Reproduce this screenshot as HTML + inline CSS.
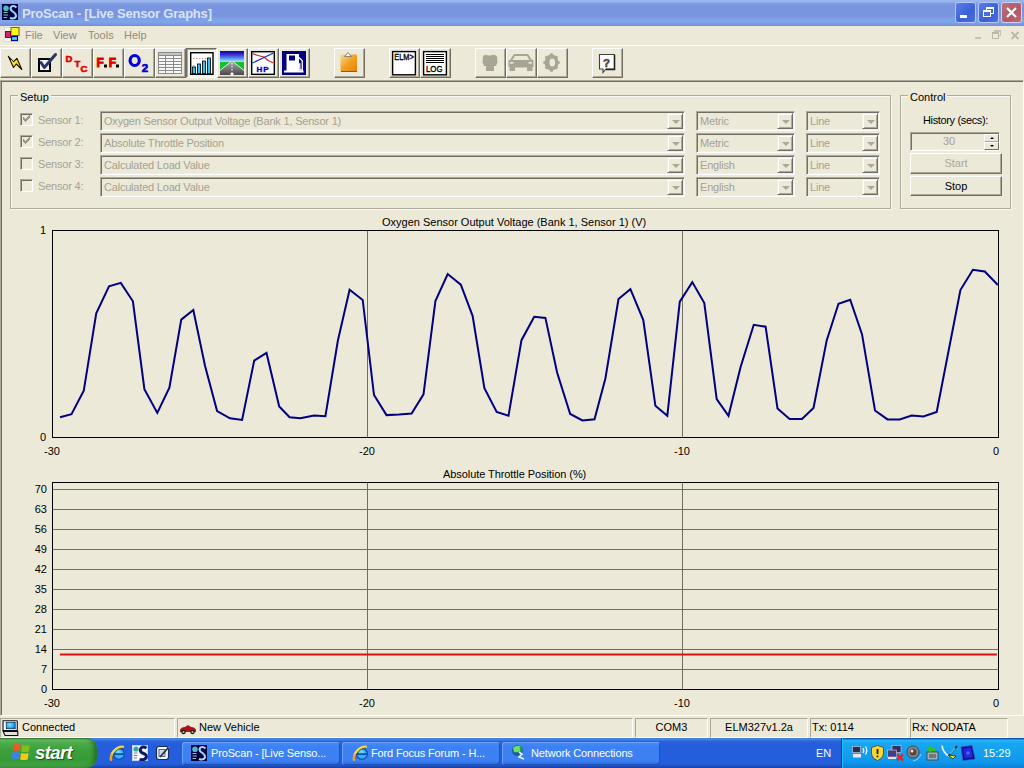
<!DOCTYPE html>
<html><head><meta charset="utf-8">
<style>
*{margin:0;padding:0;box-sizing:border-box}
html,body{width:1024px;height:768px;overflow:hidden;background:#ECE9D8;font-family:"Liberation Sans",sans-serif;font-size:11px;color:#000}
.a{position:absolute}
#title{left:0;top:0;width:1024px;height:26px;background:linear-gradient(#9AB6EE 0,#98B4EE 2px,#7F9CE0 3.5px,#7A95E0 6px,#7A95E0 16px,#7FA0E5 19px,#7AA8E8 22px,#7C98E2 24px,#7A88D8 26px)}
#ttext{left:22px;top:6px;font-weight:bold;font-size:13px;color:#D8E4F8;letter-spacing:-0.2px;white-space:nowrap}
.tb{top:2px;width:21px;height:21px;border:1px solid #B8C8F4;border-radius:3px;background:linear-gradient(135deg,#5A7EE8,#3A60D8 60%,#4A70E0)}
#menubar{left:0;top:26px;width:1024px;height:19px;background:#ECE9D8}
.mi{top:29px;color:#8F8C80;font-size:11px}
#toolbar{left:0;top:45px;width:1024px;height:36px}
.pressed{border-left:1px solid #716F64!important;border-top:1px solid #716F64!important;border-right:1px solid #fff!important;border-bottom:1px solid #fff!important;box-shadow:inset 1px 1px 0 #ACA899!important;background:#F4F3EE}
.btn{top:48px;width:31px;height:30px;border-left:1px solid #fff;border-top:1px solid #fff;border-right:1px solid #716F64;border-bottom:1px solid #716F64;box-shadow:inset -1px -1px 0 #ACA899}
.sunk{border-top:1px solid #716F64;border-left:1px solid #716F64;border-bottom:1px solid #fff;border-right:1px solid #fff}
.grp{border:1px solid #AEAB9C;box-shadow:inset 1px 1px 0 #F8F7F0,1px 1px 0 #F8F7F0}
.gl{background:#ECE9D8;padding:0 2px;white-space:nowrap}
.combo{height:20px;border-top:1px solid #ACA899;border-left:1px solid #ACA899;border-bottom:1px solid #fff;border-right:1px solid #fff;box-shadow:inset 1px 1px 0 #716F64,inset -1px -1px 0 #F1EFE2;background:#ECE9D8;color:#A4A194;white-space:nowrap;overflow:hidden}
.combo span{position:absolute;left:3px;top:3px;letter-spacing:-0.2px}
.dd{position:absolute;right:1px;top:1px;width:16px;height:16px;border-top:1px solid #F1EFE2;border-left:1px solid #F1EFE2;border-right:1px solid #716F64;border-bottom:1px solid #716F64;box-shadow:inset 1px 1px 0 #fff,inset -1px -1px 0 #ACA899;background:#ECE9D8}
.dd:after{content:"";position:absolute;left:4px;top:6px;border-left:4px solid transparent;border-right:4px solid transparent;border-top:4px solid #ACA899}
.chk{width:13px;height:13px;border-top:1px solid #ACA899;border-left:1px solid #ACA899;border-bottom:1px solid #fff;border-right:1px solid #fff;box-shadow:inset 1px 1px 0 #716F64,inset -1px -1px 0 #F1EFE2;background:#ECE9D8}
.slab{color:#A4A194;white-space:nowrap;letter-spacing:-0.2px}
.pb{border-top:1px solid #fff;border-left:1px solid #fff;border-right:1px solid #716F64;border-bottom:1px solid #716F64;box-shadow:inset -1px -1px 0 #ACA899;text-align:center;background:#ECE9D8}
.ylab{text-align:right;width:30px;white-space:nowrap}
.xlab{width:40px;text-align:center;white-space:nowrap}
#status{left:0;top:718px;width:1024px;height:20px;background:#ECE9D8}
.sp{top:718px;height:20px;border-top:1px solid #ACA899;border-left:1px solid #ACA899;border-right:1px solid #fff;border-bottom:1px solid #fff;white-space:nowrap}
#taskbar{left:0;top:738px;width:1024px;height:30px;background:linear-gradient(#3168D5 0,#4993E6 1px,#2D63DE 3px,#245EDC 6px,#245EDC 26px,#1941A5 30px)}
.tt{top:747px;color:#fff;white-space:nowrap;letter-spacing:-0.15px}
.task{top:742px;height:23px;border-radius:3px;background:linear-gradient(#4A8CF7,#3C81F3 20%,#3C81F3 80%,#2E6AE0);color:#fff;font-size:11px;white-space:nowrap;box-shadow:inset 1px 1px 0 #6AA0F8,inset -1px -1px 0 #1E52B7}
</style></head><body>

<!-- TITLE BAR -->
<div id="title" class="a"></div>
<svg class="a" style="left:2px;top:4px" width="16" height="16" viewBox="0 0 16 16"><rect width="16" height="16" fill="#000040"/><path d="M14.5 3.5 Q12 1 9.5 2.5 Q7.5 4.5 10 7 Q14.5 9.5 14 12.5 Q12.5 15.5 8 14" stroke="#A8D8F0" stroke-width="2" fill="none"/><circle cx="4" cy="4.2" r="2.8" fill="#48B8D0"/><path d="M1.5 8.5 H5.5M1.5 11 H6M1.5 13.5 H5" stroke="#90C8A0" stroke-width="1.2"/></svg>
<div id="ttext" class="a">ProScan - [Live Sensor Graphs]</div>
<div class="a tb" style="left:955px"><div class="a" style="left:4px;top:12px;width:7px;height:3px;background:#fff"></div></div>
<div class="a tb" style="left:978px"><div class="a" style="left:7px;top:4px;width:8px;height:7px;border:1px solid #fff;border-top-width:2px"></div><div class="a" style="left:4px;top:7px;width:8px;height:7px;border:1px solid #fff;border-top-width:2px;background:#4A6EDC"></div></div>
<div class="a tb" style="left:1001px;border-color:#D0D0F4;background:linear-gradient(135deg,#B87080,#B05A68 60%,#C06870)"><svg class="a" style="left:3px;top:3px" width="13" height="13" viewBox="0 0 13 13"><path d="M2 2 L11 11M11 2 L2 11" stroke="#fff" stroke-width="2.2"/></svg></div>
<!-- MENU BAR -->
<div id="menubar" class="a"></div>
<svg class="a" style="left:4px;top:27px" width="16" height="16" viewBox="0 0 16 16"><rect x="0.5" y="0.5" width="15" height="14" fill="#F8F8F0" stroke="#D8D8D0" stroke-width="0.8"/><rect x="7" y="0.5" width="8" height="8" fill="#F8F820" stroke="#707000" stroke-width="1"/><rect x="1.5" y="4.5" width="5" height="6" fill="#D02070" stroke="#800030" stroke-width="1"/><rect x="7.5" y="9.5" width="6" height="4" fill="#40D8F8" stroke="#000080" stroke-width="1.2"/></svg>
<div class="a mi" style="left:25px">File</div>
<div class="a mi" style="left:53px">View</div>
<div class="a mi" style="left:88px">Tools</div>
<div class="a mi" style="left:124px">Help</div>
<!-- mdi controls -->
<div class="a" style="left:975px;top:37px;width:6px;height:2px;background:#C4C1B4"></div>
<div class="a" style="left:994px;top:30px;width:7px;height:6px;border:1px solid #C4C1B4;border-top-width:2px"></div>
<div class="a" style="left:992px;top:32px;width:7px;height:7px;border:1px solid #BAB7AA;border-top-width:2px;background:#ECE9D8"></div>
<svg class="a" style="left:1010px;top:31px" width="10" height="9" viewBox="0 0 10 9"><path d="M1.5 1 L8.5 8M8.5 1 L1.5 8" stroke="#BAB7AA" stroke-width="1.8"/></svg>
<!-- TOOLBAR -->
<div id="toolbar" class="a"></div>
<div class="a" style="left:0;top:45px;width:1024px;height:1px;background:#fff"></div>


<!-- toolbar buttons -->
<div class="a btn" style="left:0px"></div>
<div class="a btn" style="left:31px"></div>
<div class="a btn" style="left:62px"></div>
<div class="a btn" style="left:93px"></div>
<div class="a btn" style="left:124px"></div>
<div class="a btn" style="left:155px"></div>
<div class="a btn pressed" style="left:186px"></div>
<div class="a btn" style="left:217px"></div>
<div class="a btn" style="left:248px"></div>
<div class="a btn" style="left:279px"></div>
<div class="a btn" style="left:334px"></div>
<div class="a btn" style="left:389px"></div>
<div class="a btn" style="left:420px"></div>
<div class="a btn" style="left:475px"></div>
<div class="a btn" style="left:506px"></div>
<div class="a btn" style="left:537px"></div>
<div class="a btn" style="left:592px"></div>
<!-- icons -->
<svg class="a" style="left:6px;top:54px" width="18" height="18" viewBox="0 0 18 18"><path d="M2.3 2.3 L7.5 7.8 L10.9 4.3 L15.8 15.5 L10.3 10 L7.5 13.5 Z" fill="#F8D820" stroke="#181000" stroke-width="1.1" stroke-linejoin="round"/><path d="M5 6 L7.8 9.5 L10.5 6.8" stroke="#FFF070" stroke-width="1" fill="none"/></svg>
<svg class="a" style="left:36px;top:52px" width="22" height="21" viewBox="0 0 22 21"><rect x="3" y="7" width="11" height="12" fill="#F4F4FC" stroke="#000" stroke-width="2"/><path d="M5 10.5 L8.3 15.5 L19.5 2.5" stroke="#2C3468" stroke-width="3" fill="none" stroke-linejoin="round" stroke-linecap="round"/></svg>
<svg class="a" style="left:64px;top:53px" width="26" height="21" viewBox="0 0 26 21" font-family="Liberation Sans" font-weight="bold" fill="#E00000" stroke="#E00000" stroke-width="0.6"><text x="1.5" y="8.5" font-size="9.5">D</text><text x="10.5" y="14" font-size="9.5">T</text><text x="16.5" y="19" font-size="9.5">C</text></svg>
<svg class="a" style="left:94px;top:53px" width="29" height="18" viewBox="0 0 29 18" font-family="Liberation Sans" font-weight="bold"><text x="2.5" y="14" font-size="12" fill="#E00000" stroke="#E00000" stroke-width="0.9">F</text><rect x="10" y="11.5" width="3" height="3" fill="#000"/><text x="14.8" y="14" font-size="12" fill="#E00000" stroke="#E00000" stroke-width="0.9">F</text><rect x="22" y="11.5" width="3" height="3" fill="#000"/></svg>
<svg class="a" style="left:126px;top:52px" width="26" height="22" viewBox="0 0 26 22"><ellipse cx="8.7" cy="8.5" rx="4.6" ry="5" fill="none" stroke="#0000E0" stroke-width="3.2"/><text x="15.8" y="19.8" font-family="Liberation Sans" font-weight="bold" font-size="11.5" fill="#0000D8" stroke="#0000D8" stroke-width="0.7">2</text></svg>
<svg class="a" style="left:158px;top:52px" width="25" height="23" viewBox="0 0 25 23"><rect x="0" y="0" width="24" height="22" fill="#8A8A8A"/><g fill="#F8F8F8"><rect x="1" y="4" width="6" height="2"/><rect x="8" y="4" width="7" height="2"/><rect x="16" y="4" width="7" height="2"/><rect x="1" y="7" width="6" height="2"/><rect x="8" y="7" width="7" height="2"/><rect x="16" y="7" width="7" height="2"/><rect x="1" y="10" width="6" height="2"/><rect x="8" y="10" width="7" height="2"/><rect x="16" y="10" width="7" height="2"/><rect x="1" y="13" width="6" height="2"/><rect x="8" y="13" width="7" height="2"/><rect x="16" y="13" width="7" height="2"/><rect x="1" y="16" width="6" height="2"/><rect x="8" y="16" width="7" height="2"/><rect x="16" y="16" width="7" height="2"/><rect x="1" y="19" width="6" height="2"/><rect x="8" y="19" width="7" height="2"/><rect x="16" y="19" width="7" height="2"/></g><rect x="1" y="1" width="22" height="2" fill="#C4C4C4"/></svg>
<svg class="a" style="left:190px;top:52px" width="24" height="23" viewBox="0 0 24 23"><rect x="0.7" y="0.7" width="22.3" height="21.6" fill="#fff" stroke="#000" stroke-width="1.4"/><path d="M3 6.5H21M3 13.5H5" stroke="#A08080" stroke-width="0.8" stroke-dasharray="1.5 1.5"/><g fill="#38C0F0" stroke="#101010" stroke-width="0.9"><rect x="2.5" y="15" width="3" height="6.5"/><rect x="7.5" y="12" width="3" height="9.5"/><rect x="12.5" y="9" width="3" height="12.5"/><rect x="17.5" y="6" width="3" height="15.5"/></g></svg>
<svg class="a" style="left:220px;top:51px" width="24" height="24" viewBox="0 0 24 24"><defs><linearGradient id="sky" x1="0" y1="0" x2="0" y2="1"><stop offset="0" stop-color="#100090"/><stop offset="0.3" stop-color="#3828D8"/><stop offset="0.65" stop-color="#5090E8"/><stop offset="1" stop-color="#B8E0F8"/></linearGradient><linearGradient id="rd" x1="0" y1="0" x2="0" y2="1"><stop offset="0" stop-color="#A8A8A8"/><stop offset="1" stop-color="#484848"/></linearGradient></defs><rect width="24" height="11" fill="url(#sky)"/><rect y="11" width="24" height="13" fill="#10C030"/><path d="M10.5 11 H13.5 L24 19.5 V24 H0 V19.5 Z" fill="url(#rd)"/><path d="M10.5 11 L0 19.5M13.5 11 L24 19.5" stroke="#F0F8F0" stroke-width="0.9"/><path d="M12 12 V22" stroke="#fff" stroke-width="1" stroke-dasharray="1.5 1.5"/><rect x="10.5" y="22" width="3" height="2" fill="#fff"/></svg>
<svg class="a" style="left:251px;top:51px" width="24" height="24" viewBox="0 0 24 24"><rect x="0.7" y="0.7" width="22.6" height="22.6" fill="#fff" stroke="#000" stroke-width="1.4"/><path d="M1.5 2.5 L7 4.5 L13 6 L17 9.5 L22.5 12" stroke="#D02020" stroke-width="1.2" fill="none"/><path d="M1.5 12 L12 7 L22.5 2" stroke="#1030C8" stroke-width="1.2" fill="none"/><text x="5.5" y="21.3" font-family="Liberation Sans" font-weight="bold" font-size="8" fill="#0000C0" stroke="#0000C0" stroke-width="0.35" letter-spacing="1">HP</text></svg>
<svg class="a" style="left:282px;top:51px" width="24" height="24" viewBox="0 0 24 24"><rect width="24" height="24" fill="#000080"/><rect x="4.5" y="3" width="12.5" height="17" fill="#fff"/><rect x="7" y="4.5" width="6" height="5" fill="#000080"/><path d="M17 6.5 L20.3 9.8 V19 H17.8 V13 H17" stroke="#fff" stroke-width="1.3" fill="none"/><rect x="2" y="19.5" width="19.5" height="2" fill="#fff"/></svg>
<svg class="a" style="left:339px;top:51px" width="20" height="22" viewBox="0 0 20 22"><defs><linearGradient id="clip" x1="0" y1="0" x2="1" y2="1"><stop offset="0" stop-color="#F8D898"/><stop offset="0.5" stop-color="#F0A020"/><stop offset="1" stop-color="#E88010"/></linearGradient></defs><rect x="1.5" y="3.5" width="16.5" height="17" rx="1" fill="url(#clip)"/><path d="M2 20.5 H18" stroke="#A05010" stroke-width="1"/><path d="M5.5 5.5 L9 1.5 L12.5 5.5 Z" fill="#F0F0F0" stroke="#707070" stroke-width="0.8"/></svg>
<svg class="a" style="left:391px;top:50px" width="26" height="26" viewBox="0 0 26 26"><rect x="1.6" y="1.6" width="22.8" height="23.2" fill="#fff" stroke="#000" stroke-width="1.4"/><text x="3.3" y="9.8" font-family="Liberation Sans" font-size="9" fill="#000" stroke="#000" stroke-width="0.35" textLength="19.5" lengthAdjust="spacingAndGlyphs">ELM&gt;</text></svg>
<svg class="a" style="left:422px;top:50px" width="26" height="26" viewBox="0 0 26 26"><rect x="1.6" y="1.6" width="22.8" height="23.2" fill="#fff" stroke="#000" stroke-width="1.4"/><path d="M4 4.5H22M4 6.5H22M4 8.5H22M4 10.5H22M4 12.5H22" stroke="#000" stroke-width="1"/><text x="4" y="22.3" font-family="Liberation Sans" font-size="9" fill="#000" stroke="#000" stroke-width="0.35" textLength="16.5" lengthAdjust="spacingAndGlyphs">LOG</text></svg>
<svg class="a" style="left:481px;top:53px" width="18" height="19" viewBox="0 0 18 19"><path d="M2 3.5 Q3.5 0.8 7 2.5 H10 Q13.5 0.8 16 3.5 L16.5 9 L15 13 H13 V18 H5 V13 H3 L1.5 9 Z" fill="#A8A594"/></svg>
<svg class="a" style="left:508px;top:53px" width="26" height="19" viewBox="0 0 26 19"><path d="M6 1 H20 L24 7 H25.5 V14 H24.5 V18 H19 V14.5 H7 V18 H1.5 V14 H0.5 V7 H2 Z" fill="#A8A594"/><path d="M7 3 H19 L21.5 7 H4.5 Z" fill="#ECE9D8"/><rect x="2" y="9" width="3.5" height="1.6" fill="#ECE9D8"/><rect x="20.5" y="9" width="3.5" height="1.6" fill="#ECE9D8"/></svg>
<svg class="a" style="left:543px;top:53px" width="17" height="19" viewBox="0 0 17 19"><g fill="#A8A594"><ellipse cx="8.5" cy="9.5" rx="7" ry="8"/><g stroke="#A8A594" stroke-width="2.6"><path d="M8.5 0.3V18.7M0.3 9.5H16.7M2.7 3.3L14.3 15.7M14.3 3.3L2.7 15.7"/></g></g><ellipse cx="9.3" cy="9.5" rx="2.8" ry="4" fill="#ECE9D8"/></svg>
<svg class="a" style="left:598px;top:53px" width="19" height="21" viewBox="0 0 19 21"><path d="M1.5 1.5 H16.5 V16 H8 L5 19.5 V16 H1.5 Z" fill="#FAFAFA" stroke="#404040" stroke-width="1.1"/><path d="M16.5 2 V16.5 H8" stroke="#202020" stroke-width="1.5" fill="none"/><text x="5" y="13.5" font-family="Liberation Sans" font-weight="bold" font-size="11.5" fill="#484848" stroke="#484848" stroke-width="0.5">?</text></svg>

<!-- CLIENT -->
<div class="a" style="left:0;top:80px;width:1024px;height:636px;border-top:1px solid #ACA899;border-left:1px solid #ACA899;border-right:1px solid #fff;border-bottom:1px solid #fff;box-shadow:inset 1px 1px 0 #716F64"></div>


<!-- SETUP GROUP -->
<div class="a grp" style="left:10px;top:95px;width:881px;height:114px"></div>
<div class="a gl" style="left:18px;top:91px">Setup</div>
<div class="a chk" style="left:20px;top:113px"></div>
<svg class="a" style="left:23px;top:115px" width="7" height="7" viewBox="0 0 7 7" shape-rendering="crispEdges"><path d="M6 0h1v1h-1zM5 1h1v1h-1zM6 1h1v1h-1zM0 2h1v1h-1zM4 2h1v1h-1zM5 2h1v1h-1zM6 2h1v1h-1zM0 3h1v1h-1zM1 3h1v1h-1zM3 3h1v1h-1zM4 3h1v1h-1zM5 3h1v1h-1zM0 4h1v1h-1zM1 4h1v1h-1zM2 4h1v1h-1zM3 4h1v1h-1zM4 4h1v1h-1zM1 5h1v1h-1zM2 5h1v1h-1zM3 5h1v1h-1zM2 6h1v1h-1z" fill="#9A978A"/></svg>
<div class="a slab" style="left:38px;top:114px">Sensor 1:</div>
<div class="a combo" style="left:100px;top:111px;width:585px"><span>Oxygen Sensor Output Voltage (Bank 1, Sensor 1)</span><div class="dd"></div></div>
<div class="a combo" style="left:696px;top:111px;width:99px"><span>Metric</span><div class="dd"></div></div>
<div class="a combo" style="left:806px;top:111px;width:74px"><span>Line</span><div class="dd"></div></div>
<div class="a chk" style="left:20px;top:135px"></div>
<svg class="a" style="left:23px;top:137px" width="7" height="7" viewBox="0 0 7 7" shape-rendering="crispEdges"><path d="M6 0h1v1h-1zM5 1h1v1h-1zM6 1h1v1h-1zM0 2h1v1h-1zM4 2h1v1h-1zM5 2h1v1h-1zM6 2h1v1h-1zM0 3h1v1h-1zM1 3h1v1h-1zM3 3h1v1h-1zM4 3h1v1h-1zM5 3h1v1h-1zM0 4h1v1h-1zM1 4h1v1h-1zM2 4h1v1h-1zM3 4h1v1h-1zM4 4h1v1h-1zM1 5h1v1h-1zM2 5h1v1h-1zM3 5h1v1h-1zM2 6h1v1h-1z" fill="#9A978A"/></svg>
<div class="a slab" style="left:38px;top:136px">Sensor 2:</div>
<div class="a combo" style="left:100px;top:133px;width:585px"><span>Absolute Throttle Position</span><div class="dd"></div></div>
<div class="a combo" style="left:696px;top:133px;width:99px"><span>Metric</span><div class="dd"></div></div>
<div class="a combo" style="left:806px;top:133px;width:74px"><span>Line</span><div class="dd"></div></div>
<div class="a chk" style="left:20px;top:157px"></div>
<div class="a slab" style="left:38px;top:158px">Sensor 3:</div>
<div class="a combo" style="left:100px;top:155px;width:585px"><span>Calculated Load Value</span><div class="dd"></div></div>
<div class="a combo" style="left:696px;top:155px;width:99px"><span>English</span><div class="dd"></div></div>
<div class="a combo" style="left:806px;top:155px;width:74px"><span>Line</span><div class="dd"></div></div>
<div class="a chk" style="left:20px;top:179px"></div>
<div class="a slab" style="left:38px;top:180px">Sensor 4:</div>
<div class="a combo" style="left:100px;top:177px;width:585px"><span>Calculated Load Value</span><div class="dd"></div></div>
<div class="a combo" style="left:696px;top:177px;width:99px"><span>English</span><div class="dd"></div></div>
<div class="a combo" style="left:806px;top:177px;width:74px"><span>Line</span><div class="dd"></div></div>

<!-- CONTROL GROUP -->
<div class="a grp" style="left:900px;top:95px;width:111px;height:114px"></div>
<div class="a gl" style="left:908px;top:91px">Control</div>
<div class="a" style="left:923px;top:114px;white-space:nowrap;letter-spacing:-0.35px">History (secs):</div>
<div class="a combo" style="left:910px;top:132px;width:90px;height:19px"><span style="left:32px;top:2px">30</span></div>
<div class="a" style="left:984px;top:134px;width:15px;height:8px;border-top:1px solid #fff;border-left:1px solid #fff;border-right:1px solid #716F64;border-bottom:1px solid #ACA899"></div>
<div class="a" style="left:984px;top:142px;width:15px;height:8px;border-top:1px solid #fff;border-left:1px solid #fff;border-right:1px solid #716F64;border-bottom:1px solid #716F64"></div>
<div class="a" style="left:990px;top:137px;border-left:2px solid transparent;border-right:2px solid transparent;border-bottom:2px solid #000"></div>
<div class="a" style="left:990px;top:145px;border-left:2px solid transparent;border-right:2px solid transparent;border-top:2px solid #000"></div>
<div class="a pb" style="left:910px;top:153px;width:92px;height:21px;color:#ACA899;line-height:18px">Start</div>
<div class="a pb" style="left:910px;top:176px;width:92px;height:20px;line-height:18px">Stop</div>

<!-- CHARTS -->
<svg class="a" style="left:0;top:0" width="1024" height="768" viewBox="0 0 1024 768">
<g stroke="#716F64" stroke-width="1">
<path d="M367.5 231V437M682.5 231V437"/>
<path d="M367.5 483V689M682.5 483V689"/>
<path d="M53 489.5H998M53 509.5H998M53 529.5H998M53 549.5H998M53 569.5H998M53 589.5H998M53 609.5H998M53 629.5H998M53 649.5H998M53 669.5H998"/>
</g>
<rect x="52.5" y="230.5" width="946" height="207" fill="none" stroke="#000"/>
<rect x="52.5" y="482.5" width="946" height="207" fill="none" stroke="#000"/>
<polyline stroke-width="2" points="60,417.3 71.5,414.2 83.75,390.8 96.25,313.3 109,286.25 120.8,282.9 132.9,301.25 144.4,389.2 157.3,412.9 169.4,387.7 181.25,319.6 193.3,310 205,365.8 217.1,411 230,418.3 242.1,420 254.2,360.6 266.5,352.9 279.2,406.5 289.6,417.3 300.4,418.3 314,415.4 325.4,416.25 337.9,340.5 349.6,289.8 362.7,300 374,395 386.5,415.1 399,414.5 411.6,413.5 423.5,394.3 435.4,301 447.7,274 460.8,284.6 472.6,315.8 484.4,388.1 496.7,412 508.5,415.8 521.5,340.2 534.2,316.7 545.4,317.9 557.1,372.5 570.2,414 582.5,420.4 594.5,419.3 605.4,378.5 618.5,299 630.4,289.2 643.3,320 655.4,405.8 667.3,415.8 679.8,301.7 692.3,282.1 704.3,303.1 716.7,399.2 728.5,415.8 740.6,366.9 753.75,324.8 765.6,326.7 777.5,408.5 789.6,419 802,419 813.5,407.9 826.7,340.4 838.5,303.75 850.2,299.7 862,334.2 875,410.5 887.5,419.4 899.7,419.4 911.7,415.5 923.4,416.4 936.7,412 960.4,290 972.9,269.8 984.8,271.5 997.9,285" fill="none" stroke="#000080" stroke-linejoin="miter"/>
<path d="M60 654.5H997" stroke="#E01010" stroke-width="2"/>
</svg>
<div class="a" style="left:382px;top:216px;white-space:nowrap">Oxygen Sensor Output Voltage (Bank 1, Sensor 1) (V)</div>
<div class="a" style="left:443px;top:468px;white-space:nowrap;letter-spacing:-0.07px">Absolute Throttle Position (%)</div>
<div class="a ylab" style="left:16px;top:224px">1</div>
<div class="a ylab" style="left:16px;top:431px">0</div>
<div class="a xlab" style="left:32px;top:445px">-30</div>
<div class="a xlab" style="left:347px;top:445px">-20</div>
<div class="a xlab" style="left:662px;top:445px">-10</div>
<div class="a xlab" style="left:976px;top:445px">0</div>
<div class="a xlab" style="left:32px;top:697px">-30</div>
<div class="a xlab" style="left:347px;top:697px">-20</div>
<div class="a xlab" style="left:662px;top:697px">-10</div>
<div class="a xlab" style="left:976px;top:697px">0</div>
<div class="a ylab" style="left:17px;top:483px">70</div>
<div class="a ylab" style="left:17px;top:503px">63</div>
<div class="a ylab" style="left:17px;top:523px">56</div>
<div class="a ylab" style="left:17px;top:543px">49</div>
<div class="a ylab" style="left:17px;top:563px">42</div>
<div class="a ylab" style="left:17px;top:583px">35</div>
<div class="a ylab" style="left:17px;top:603px">28</div>
<div class="a ylab" style="left:17px;top:623px">21</div>
<div class="a ylab" style="left:17px;top:643px">14</div>
<div class="a ylab" style="left:17px;top:663px">7</div>
<div class="a ylab" style="left:17px;top:683px">0</div>

<!-- STATUS -->
<div id="status" class="a"></div>
<div class="a sp" style="left:0px;width:175px"></div>
<div class="a sp" style="left:177px;width:456px"></div>
<div class="a sp" style="left:635px;width:73px;text-align:center;padding-top:2px">COM3</div>
<div class="a sp" style="left:710px;width:98px;text-align:center;padding-top:2px">ELM327v1.2a</div>
<div class="a sp" style="left:810px;width:98px"></div>
<div class="a sp" style="left:910px;width:98px"></div>
<div class="a" style="left:22px;top:721px">Connected</div>
<div class="a" style="left:199px;top:721px">New Vehicle</div>
<div class="a" style="left:812px;top:721px">Tx: 0114</div>
<div class="a" style="left:912px;top:721px">Rx: NODATA</div>



<svg class="a" style="left:2px;top:720px" width="17" height="17" viewBox="0 0 17 17"><defs><radialGradient id="scr" cx="0.4" cy="0.4" r="0.7"><stop offset="0" stop-color="#70E8FF"/><stop offset="0.6" stop-color="#30A8F0"/><stop offset="1" stop-color="#1060B8"/></radialGradient></defs><path d="M1 0.8 H14.5 Q15.3 0.8 15.3 1.6 V10.5 H1 Z" fill="#F2F4F8" stroke="#101010" stroke-width="1.1"/><rect x="4.2" y="2.2" width="9" height="6.6" fill="url(#scr)" stroke="#102040" stroke-width="0.6"/><path d="M0.8 10.5 L3 15.5 H15.8 V11.5 H1.5" fill="#E0E0DC" stroke="#101010" stroke-width="1.1"/></svg>
<svg class="a" style="left:179px;top:723px" width="18" height="12" viewBox="0 0 18 12"><path d="M1 7 Q2 4 6 4 L9 2 L12 4 Q16 4 17 7 V9 H1 Z" fill="#B01010"/><circle cx="4.5" cy="9" r="2.3" fill="#202020"/><circle cx="13.5" cy="9" r="2.3" fill="#202020"/><circle cx="4.5" cy="9" r="1" fill="#C0C0A0"/><circle cx="13.5" cy="9" r="1" fill="#C0C0A0"/></svg>

<!-- TASKBAR -->
<div id="taskbar" class="a"></div>
<!-- start button -->
<div class="a" style="left:0;top:738px;width:97px;height:30px;border-radius:0 10px 10px 0;background:linear-gradient(#3A8A3A 0,#6CBF6C 2px,#4AAE4A 5px,#3CA03C 12px,#379A37 22px,#3FA53F 27px,#2F8A2F 30px);box-shadow:inset -3px 0 4px rgba(20,70,20,.55),inset 0 -2px 2px rgba(120,200,120,.4)"></div>
<svg class="a" style="left:10px;top:743px" width="21" height="19" viewBox="0 0 21 19"><g transform="skewX(-8) translate(2 0)"><path d="M2 1.5 Q5 0.5 9 1.5 L9 8 Q5 7 2 8 Z" fill="#F0582A"/><path d="M10.5 2 Q14 3 18 2 L18 8.5 Q14 9.5 10.5 8.5 Z" fill="#80C020"/><path d="M2 9.5 Q5 8.5 9 9.5 L9 16 Q5 15 2 16 Z" fill="#4080F0"/><path d="M10.5 10 Q14 11 18 10 L18 16.5 Q14 17.5 10.5 16.5 Z" fill="#F8C810"/></g></svg>
<div class="a" style="left:35px;top:742px;font-size:18.5px;font-weight:bold;font-style:italic;color:#fff;text-shadow:1px 1px 1px #1A4A1A;letter-spacing:-0.6px">start</div>
<!-- quick launch -->
<svg class="a" style="left:109px;top:745px" width="16" height="16" viewBox="0 0 16 16"><circle cx="10" cy="9" r="5.4" fill="#38B4F4" stroke="#0A50C0" stroke-width="1.3"/><circle cx="9.5" cy="7.5" r="2.5" fill="#80E0FF" opacity="0.7"/><rect x="5" y="8.2" width="10" height="1.8" fill="#0A50C0"/><path d="M11.5 11.2 L15.8 11.2 L15.8 15 L12 15 Z" fill="#245EDC" opacity="0"/><path d="M2 14.5 Q1.5 8 7 4 Q10.5 1.5 14 1.8" stroke="#F0D850" stroke-width="2.4" fill="none" stroke-linecap="round"/><path d="M3.5 14 Q3 9 8 5 Q11 3 14 3" stroke="#584010" stroke-width="0.7" fill="none"/><path d="M2 14.5 Q1.6 12 2.5 10" stroke="#E8A040" stroke-width="2.4" fill="none" stroke-linecap="round"/></svg>
<svg class="a" style="left:132px;top:745px" width="16" height="16" viewBox="0 0 16 16"><rect width="16" height="16" fill="#F4F8FF"/><rect x="0.5" y="0.5" width="15" height="15" fill="none" stroke="#C0D0F0"/><circle cx="4" cy="4" r="2.6" fill="#30A8A0"/><path d="M14.5 3 Q10 0.5 8.5 4 Q7.5 7 11.5 8.5 Q15.5 10 14 13 Q12 15.5 7.5 14.5" stroke="#101860" stroke-width="3" fill="none"/><path d="M2 8 H5.5M2 10.5 H5.5M2 13 H5" stroke="#708090" stroke-width="1"/></svg>
<svg class="a" style="left:155px;top:745px" width="16" height="16" viewBox="0 0 16 16"><rect x="1.5" y="1.5" width="12" height="13" rx="2.5" fill="#F4F8FF" stroke="#1A2A60" stroke-width="1.2"/><rect x="4" y="4.5" width="6" height="7" fill="#C8D8F0" stroke="#404860" stroke-width="0.8"/><path d="M5 12 L13 3" stroke="#202840" stroke-width="1.6"/><path d="M13 3 L15 2" stroke="#E06040" stroke-width="1.2"/></svg>
<!-- task buttons -->
<div class="a task" style="left:182px;width:158px"></div>
<div class="a task" style="left:342px;width:158px"></div>
<div class="a task" style="left:502px;width:158px"></div>
<svg class="a" style="left:191px;top:745px" width="16" height="16" viewBox="0 0 16 16"><rect width="16" height="16" fill="#000040"/><path d="M14.5 3.5 Q12 1 9.5 2.5 Q7.5 4.5 10 7 Q14.5 9.5 14 12.5 Q12.5 15.5 8 14" stroke="#A8D8F0" stroke-width="2" fill="none"/><circle cx="4" cy="4.2" r="2.8" fill="#48B8D0"/><path d="M1.5 8.5 H5.5M1.5 11 H6M1.5 13.5 H5" stroke="#90C8A0" stroke-width="1.2"/></svg>
<div class="a tt" style="left:211px">ProScan - [Live Senso...</div>
<svg class="a" style="left:352px;top:745px" width="16" height="16" viewBox="0 0 16 16"><circle cx="10" cy="9" r="5.4" fill="#38B4F4" stroke="#0A50C0" stroke-width="1.3"/><circle cx="9.5" cy="7.5" r="2.5" fill="#80E0FF" opacity="0.7"/><rect x="5" y="8.2" width="10" height="1.8" fill="#0A50C0"/><path d="M11.5 11.2 L15.8 11.2 L15.8 15 L12 15 Z" fill="#245EDC" opacity="0"/><path d="M2 14.5 Q1.5 8 7 4 Q10.5 1.5 14 1.8" stroke="#F0D850" stroke-width="2.4" fill="none" stroke-linecap="round"/><path d="M3.5 14 Q3 9 8 5 Q11 3 14 3" stroke="#584010" stroke-width="0.7" fill="none"/><path d="M2 14.5 Q1.6 12 2.5 10" stroke="#E8A040" stroke-width="2.4" fill="none" stroke-linecap="round"/></svg>
<div class="a tt" style="left:371px">Ford Focus Forum - H...</div>
<svg class="a" style="left:511px;top:744px" width="16" height="16" viewBox="0 0 16 16"><circle cx="6.5" cy="6.5" r="5.5" fill="#1860A0"/><path d="M2 4 Q5 1 9 2 Q11 4 9 7 Q6 9 3 8 Z" fill="#70E060"/><path d="M9 3 Q11 5 10 8" stroke="#20A040" stroke-width="2" fill="none"/><path d="M8 8 L11 10 L8 13 L13 15" stroke="#E8F4FF" stroke-width="1.6" fill="none"/></svg>
<div class="a tt" style="left:531px">Network Connections</div>
<div class="a" style="left:816px;top:747px;color:#fff">EN</div>
<!-- tray -->
<div class="a" style="left:841px;top:738px;width:183px;height:30px;background:linear-gradient(#0D58B8 0,#0D58B8 1px,#2CB8F8 2px,#18A6F2 5px,#0F98EC 24px,#0B80D8 30px);border-left:1px solid #0F3FA8;box-shadow:inset 1px 0 0 #20C0F8"></div>
<svg class="a" style="left:852px;top:746px" width="17" height="13" viewBox="0 0 17 13"><rect x="0.5" y="0.5" width="8" height="6" fill="#283050" stroke="#B0B8D0" stroke-width="0.8"/><rect x="1" y="8" width="8" height="3.5" fill="#E8E8F8"/><path d="M11 2 Q12.5 4.5 11 7M13.5 0.5 Q16 4.5 13.5 8.5" stroke="#fff" stroke-width="1.2" fill="none"/></svg>
<svg class="a" style="left:871px;top:745px" width="13" height="16" viewBox="0 0 13 16"><path d="M6.5 0.5 L12.5 2.5 V8 Q12.5 13 6.5 15.5 Q0.5 13 0.5 8 V2.5 Z" fill="#F8D830" stroke="#404040" stroke-width="0.8"/><rect x="5.6" y="4" width="1.8" height="5" fill="#202020"/><rect x="5.6" y="10.5" width="1.8" height="1.8" fill="#202020"/></svg>
<svg class="a" style="left:887px;top:745px" width="18" height="17" viewBox="0 0 18 17"><rect x="5" y="0.5" width="9" height="7" fill="#303060" stroke="#C0C0D8" stroke-width="0.7"/><rect x="0.5" y="5" width="9" height="7" fill="#404080" stroke="#C0C0D8" stroke-width="0.7"/><rect x="1" y="12" width="8" height="2" fill="#E0E0F0"/><path d="M10 9.5 L16 15.5M16 9.5 L10 15.5" stroke="#E82020" stroke-width="2.2"/></svg>
<svg class="a" style="left:906px;top:745px" width="16" height="17" viewBox="0 0 16 17"><circle cx="7" cy="7" r="6" fill="#888" stroke="#303030" stroke-width="0.8"/><circle cx="7" cy="7" r="3.5" fill="#604040"/><circle cx="6" cy="6" r="1.5" fill="#E0E0E0"/><path d="M7 16 Q13 15 15 9" stroke="#A0C8FF" stroke-width="1" fill="none"/></svg>
<svg class="a" style="left:925px;top:745px" width="14" height="16" viewBox="0 0 14 16"><rect x="2" y="7" width="11" height="8" fill="#A8B0B0" stroke="#383838" stroke-width="0.8"/><rect x="4" y="9" width="7" height="4" fill="#707880"/><path d="M1 4 L6 0 V2.5 H10 V6 H6 V8 Z" fill="#30C030"/></svg>
<svg class="a" style="left:941px;top:745px" width="17" height="16" viewBox="0 0 17 16"><path d="M1 0.5 Q2 8 8 11" stroke="#F0F0F0" stroke-width="1.8" fill="none"/><path d="M16 1 L8 11" stroke="#183018" stroke-width="2"/><path d="M9 9 L14 3" stroke="#40B0F0" stroke-width="2"/><path d="M7 10 L12 14 L15 11 Z" fill="#F0E040" stroke="#303000" stroke-width="0.8"/></svg>
<svg class="a" style="left:960px;top:745px" width="16" height="16" viewBox="0 0 16 16"><path d="M1 2 L12 0.5 L15 14 L3 15.5 Z" fill="#0A0A80" stroke="#3050C0" stroke-width="0.8"/><path d="M3 3.5 L11 2.5 L13 12.5 L4.5 13.5 Z" fill="#2028E0"/><circle cx="8" cy="8" r="1.8" fill="#6080FF" opacity="0.7"/></svg>
<div class="a" style="left:983px;top:747px;color:#fff">15:29</div>


</body></html>
